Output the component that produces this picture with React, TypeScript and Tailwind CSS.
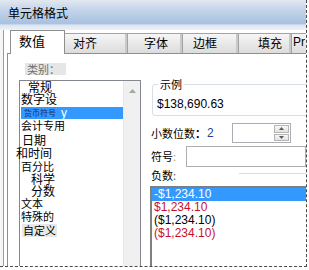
import React from "react";

const tabs = [
  { label: "对齐", cls: "w-[63px] pl-[8px]" },
  { label: "字体", cls: "w-[55px] pl-[16px]" },
  { label: "边框", cls: "w-[56px] pl-[10px]" },
  { label: "填充", cls: "w-[53px] pl-[19px]" },
  { label: "Pr", cls: "w-[30px] pl-[1px] font-['Liberation_Sans',sans-serif]" },
];

const negatives = [
  { text: "-$1,234.10", cls: "bg-[#3399ff] text-white" },
  { text: "$1,234.10", cls: "text-[#c8102e]" },
  { text: "($1,234.10)", cls: "text-black" },
  { text: "($1,234.10)", cls: "text-[#c8102e]" },
];

export default function App() {
  return (
    <div className="w-[309px] h-[270px] bg-white text-black font-['Noto_Sans_CJK_SC',sans-serif]">
      <div className="w-[307px] h-[267px] overflow-hidden border-r border-b border-dashed border-[#4a4a4a] flex flex-col">
        {/* title bar */}
        <div className="h-[30px] shrink-0 bg-[linear-gradient(to_bottom,#e2e8f0_0%,#c5d6eb_30%,#a9c1df_78%,#dbe5f1_84%,#eef3f9_100%)] pl-[8px] pt-[6px] text-[12px] leading-[14px]">
          单元格格式
        </div>

        <div className="flex flex-1 min-h-0">
          <div className="w-[3px] bg-[#f6f6f6]" />
          <div className="flex-1 flex flex-col border-l border-[#9b9b9b] bg-white min-w-0">
            {/* tabs */}
            <div className="h-[23px] shrink-0 flex items-end pl-[6px]">
              <div className="relative z-10 -mb-px h-[24px] w-[55px] shrink-0 bg-white border-l border-t border-r border-[#8e8f8f] pl-[8px] pt-[2px] text-[13px] leading-[15px]">
                数值
              </div>
              {tabs.map((t) => (
                <div
                  key={t.label}
                  className={`h-[20px] shrink-0 border-t border-r border-[#a3a3a3] bg-gradient-to-b from-[#f6f6f6] to-[#dcdcdc] shadow-[inset_-2px_0_0_#c9c9c9] pt-[1px] text-[12px] leading-[15px] ${t.cls}`}
                >
                  {t.label}
                </div>
              ))}
            </div>

            {/* panel */}
            <div className="flex-1 flex ml-[3px] border-l border-t border-[#8e8f8f] bg-white min-h-0">
              {/* category column */}
              <div className="w-[133px] shrink-0 flex flex-col">
                <div className="ml-[17px] mt-[9px] w-[41px] h-[12px] bg-[#e6e6e6] text-[#6f6f6f] text-[11px] leading-[12px] pl-[2px]">
                  类别：
                </div>
                <div className="ml-[11px] mt-[5px] w-[122px] flex-1 flex border border-b-0 border-[#828790]">
                  <div className="flex-1 flex flex-col leading-[11px]">
                    <div className="h-[12px] ml-[8px] text-[12px]">常规</div>
                    <div className="h-[14px] ml-[1px] text-[12px]">数字设</div>
                    <div className="h-[12px] ml-[1px] w-[102px] bg-[#3399ff] flex items-center">
                      <span className="ml-[3px] text-[8px] leading-[10px] text-[#1b2b66]">货币符号</span>
                      <span className="ml-[5px] text-white text-[12px] leading-[12px] font-['Liberation_Sans',sans-serif]">y</span>
                    </div>
                    <div className="h-[15px] ml-[1px] pt-[1px] text-[11px]">会计专用</div>
                    <div className="h-[13px] ml-[2px] text-[12px]">日期</div>
                    <div className="h-[14px] -ml-[4px] text-[12px]">和时间</div>
                    <div className="h-[12px] ml-[1px] text-[11px]">百分比</div>
                    <div className="h-[12px] ml-[11px] text-[12px]">科学</div>
                    <div className="h-[13px] ml-[11px] text-[12px]">分数</div>
                    <div className="h-[13px] ml-[1px] text-[11px]">文本</div>
                    <div className="h-[13px] ml-[1px] text-[11px]">特殊的</div>
                    <div className="h-[13px] ml-[2px] w-[35px] bg-[#e8e8e8] pl-[1px] pt-[1px] text-[11px]">自定义</div>
                  </div>
                  <div className="w-[17px] bg-[#f0f0f0] border-l border-[#e8e8e8] flex justify-center pt-[8px]">
                    <svg width="7" height="4" viewBox="0 0 7 4">
                      <path d="M0 4 L3.5 0 L7 4 Z" fill="#a6a6a6" />
                    </svg>
                  </div>
                </div>
              </div>

              {/* right column */}
              <div className="flex-1 flex flex-col min-w-0 overflow-hidden text-[11px] leading-[13px]">
                <fieldset className="ml-[11px] mt-[24px] w-[170px] h-[38px] shrink-0 border border-[#d5dfe5] rounded-[3px] pl-[4px] pt-[7px]">
                  <legend className="ml-[1px] px-[2px] text-[11px] leading-[13px]">示例</legend>
                  <div className="font-['Liberation_Sans',sans-serif] text-[12px] leading-[13px]">$138,690.63</div>
                </fieldset>

                <div className="mt-[7px] h-[20px] shrink-0 flex items-center pl-[10px]">
                  <div className="w-[81px] flex items-center">
                    <span>小数位数</span>
                    <span className="font-bold">：</span>
                    <span className="ml-[1px] text-[#1f3f9f] font-['Liberation_Sans',sans-serif] text-[12px]">2</span>
                  </div>
                  <div className="w-[59px] h-[20px] border border-[#abadb3] flex justify-end p-[1px]">
                    <div className="w-[15px] flex flex-col gap-[1px]">
                      <div className="flex-1 border border-[#b5b5b5] bg-gradient-to-b from-[#f7f7f7] to-[#e2e2e2] flex items-center justify-center">
                        <svg width="5" height="3" viewBox="0 0 5 3"><path d="M0 3 L2.5 0 L5 3 Z" fill="#5a5a5a" /></svg>
                      </div>
                      <div className="flex-1 border border-[#b5b5b5] bg-gradient-to-b from-[#f7f7f7] to-[#e2e2e2] flex items-center justify-center">
                        <svg width="5" height="3" viewBox="0 0 5 3"><path d="M0 0 L2.5 3 L5 0 Z" fill="#5a5a5a" /></svg>
                      </div>
                    </div>
                  </div>
                </div>

                <div className="mt-[3px] h-[21px] shrink-0 flex items-center pl-[10px]">
                  <div className="w-[46px]">
                    符号<span className="text-[#c2a23c]">:</span>
                  </div>
                  <div className="w-[120px] h-[21px] shrink-0 border border-[#abadb3] bg-white" />
                </div>

                <div className="mt-[2px] h-[13px] shrink-0 flex pl-[10px]">
                  <span>负数</span>
                  <span className="text-[#555]">:</span>
                  <div className="ml-[63px] mt-[4px] flex-1 h-px bg-[#dcdcdc]" />
                </div>

                <div className="mt-[4px] ml-[9px] flex-1 border-l-2 border-t-2 border-[#7f7f7f] bg-white font-['Liberation_Sans',sans-serif] text-[12px] leading-[13px]">
                  {negatives.map((n, i) => (
                    <div key={i} className={`h-[13px] pl-[2px] ${n.cls}`}>
                      {n.text}
                    </div>
                  ))}
                </div>
              </div>
            </div>
          </div>
        </div>
      </div>
    </div>
  );
}
